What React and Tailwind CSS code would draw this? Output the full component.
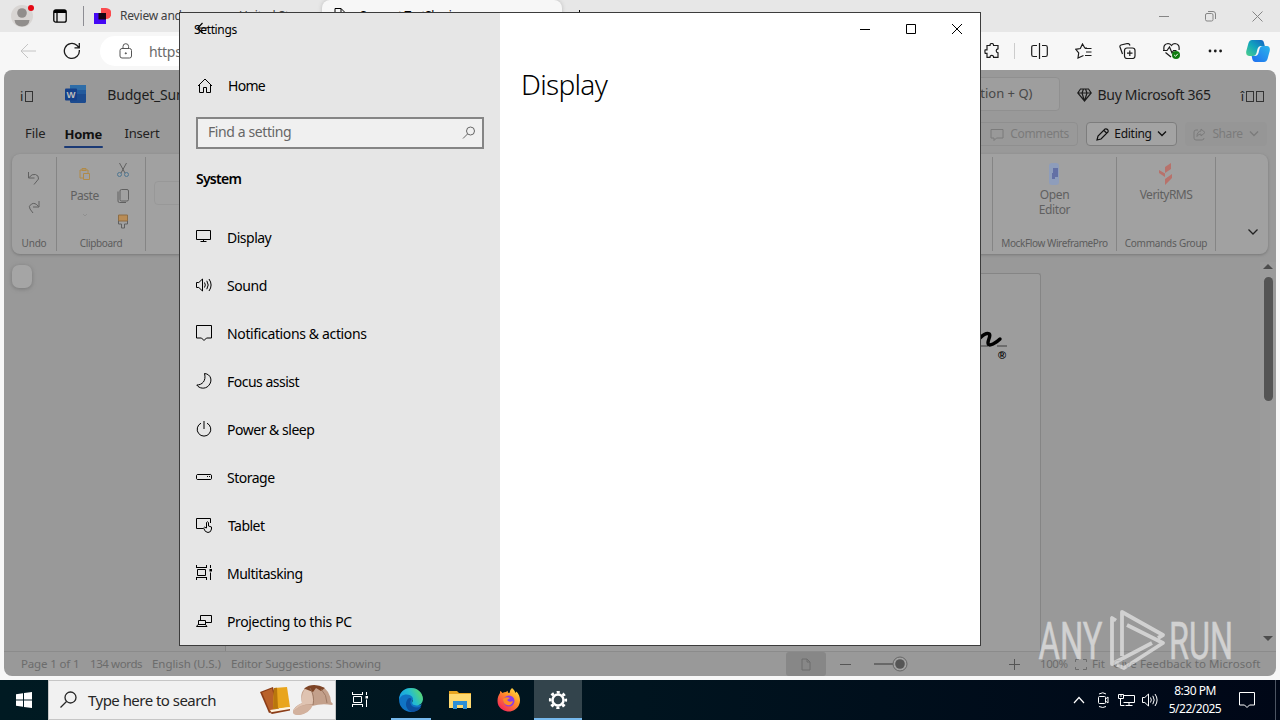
import React from "react";

const Icon = ({ w = 16, h = 16, className = "", children, sw = 1 }) => (
  <svg width={w} height={h} viewBox={`0 0 ${w} ${h}`} fill="none" stroke="currentColor" strokeWidth={sw} className={`shrink-0 ${className}`}>
    {children}
  </svg>
);

const Sound = ({ className = "" }) => (
  <Icon w={18} className={className}>
    <path d="M.5 5.500h2.300L6.500 2v12L2.800 10.500H.5z" />
    <path d="M8.500 5.500q1.600 2.500 0 5M10.800 3.800q2.800 4.200 0 8.400M13 2q4.200 6 0 12" />
  </Icon>
);

const TaskView = ({ className = "" }) => (
  <Icon className={className}>
    <path d="M0 2.500h11M0 12.500h11M.5 0v2.500M10.500 0v2.500M.5 12.500V15M10.500 12.500V15M1.500 4.500h8v6h-8zM14.500 0v3M14.500 7.500V15" />
    <path d="M13.500 4h2.500v2.500h-2.500z" fill="currentColor" stroke="none" />
  </Icon>
);

const Bubble = ({ className = "" }) => (
  <Icon w={17} h={17} className={className}>
    <path d="M.5.5h15v12.500h-5L8 15.500 5.500 13h-5z" />
  </Icon>
);

const navItems = [
  { label: "Display", track: "tracking-[-0.5px]", icon: <Icon><path d="M.5 1.500h14v9H.5zM7.500 10.500v2M4.500 12.500h6" /></Icon> },
  { label: "Sound", track: "tracking-[-0.4px]", icon: <Sound /> },
  { label: "Notifications & actions", track: "tracking-[-0.36px]", icon: <Bubble /> },
  { label: "Focus assist", track: "tracking-[-0.5px]", icon: <Icon><path d="M8.500.5C15 1 17 8 12.500 12.800 9 16.500 3 15.500.8 12 6 12 10.500 8 8.500.5z" /></Icon> },
  { label: "Power & sleep", track: "tracking-[-0.48px]", icon: <Icon><path d="M5 2.200a6.800 6.800 0 1 0 6 0M8 0v8" /></Icon> },
  { label: "Storage", track: "tracking-[-0.5px]", icon: <Icon><path d="M1.200 5.500h13.600l.7.7v3.600l-.7.7H1.200l-.7-.7V6.200zM11 7.500h1M13 7.500h1" /></Icon> },
  { label: "Tablet", track: "tracking-[-0.55px] pl-px", icon: <Icon><path d="M7 11.500H.5v-10h14V6M10.500 11V5.500q1-1.500 2 0V9l3 1v2q-.5 3.500-3.500 3.500T7.500 11l1-.8z" /></Icon> },
  { label: "Multitasking", track: "tracking-[-0.5px]", icon: <TaskView /> },
  { label: "Projecting to this PC", track: "tracking-[-0.36px]", icon: <Icon><path d="M4.500 8V2.500h11v7H10M2.500 7.500h7v4h-7zM.5 13.500l1.500-2h7.500l1.500 2z" /></Icon> },
];

function SettingsWindow() {
  return (
    <div className="absolute left-[179px] top-[12px] flex h-[634px] w-[802px] border border-[#3c3c3c] bg-white text-black">
      <aside className="w-[320px] bg-[#e6e6e6]">
        <div className="relative h-[49px] pl-[14px] pt-[9px] text-[12px] leading-[16px] tracking-[-0.35px]">
          Settings
          <Icon sw={1.200} className="absolute left-[17px] top-[7px]"><path d="M10.500 8H.8M5.500 3L.8 8l4.700 5" /></Icon>
        </div>
        <div className="flex h-[48px] items-center gap-[14px] pl-[17px] text-[14px]">
          <Icon w={17} h={16}><path d="M1 8l7-7 7 7M2.500 7v7.500h4v-5h3v5h4V7" /></Icon>
          <span className="-mt-px tracking-[-0.7px]">Home</span>
        </div>
        <div className="ml-[16px] mt-[7px] flex h-[32px] w-[288px] items-center justify-between border-2 border-[#858585] bg-[#f0f0f0] pb-[2px] pl-[10px] pr-[6px] text-[14px] text-[#666]">
          <span className="-mt-px tracking-[-0.4px]">Find a setting</span>
          <Icon w={14} h={14} className="mt-[2px]"><circle cx="8.500" cy="5" r="4" /><path d="M5.500 8L1 12.500" /></Icon>
        </div>
        <div className="mt-[20px] pl-[16px] text-[14px] font-semibold leading-[20px] tracking-[-0.75px]">System</div>
        <nav className="mt-[24px]">
          {navItems.map((n) => (
            <div key={n.label} className="flex h-[48px] items-center pl-[16px] text-[14px]">
              <span className="flex w-[31px]">{n.icon}</span>
              <span className={`whitespace-nowrap ${n.track}`}>{n.label}</span>
            </div>
          ))}
        </nav>
      </aside>
      <main className="flex-1">
        <div className="flex h-[32px] justify-end">
          <span className="flex w-[46px] items-center justify-center"><Icon w={10} h={10}><path d="M0 5.500h10" /></Icon></span>
          <span className="flex w-[46px] items-center justify-center"><Icon w={10} h={10}><path d="M.5.5h9v9h-9z" /></Icon></span>
          <span className="flex w-[46px] items-center justify-center"><Icon w={10} h={10}><path d="M0 0l10 10M10 0L0 10" /></Icon></span>
        </div>
        <h1 className="mt-[19px] pl-[21px] text-[28px] font-light leading-[40px] tracking-[-0.7px]">Display</h1>
      </main>
    </div>
  );
}

function TabStrip() {
  return (
    <div className="flex h-[32px] items-center bg-[#e7e7e7]">
      <svg width="24" height="26" viewBox="0 0 24 26" className="ml-[11px] shrink-0">
        <circle cx="11" cy="13" r="11" fill="#d8d5d3" />
        <circle cx="11" cy="10" r="4.800" fill="#918e8c" />
        <path d="M3.500 17h15q-.5 6-7.500 6.500Q4 23 3.500 17z" fill="#918e8c" />
        <circle cx="20" cy="5" r="3" fill="#e50914" />
      </svg>
      <Icon w={14} h={14} sw={1.300} className="ml-[18px] text-black"><rect x=".8" y=".8" width="12.400" height="12.400" rx="2" /><path d="M1 2.500h12" strokeWidth="3" /><path d="M4 4v9" /></Icon>
      <span className="ml-[16px] h-[20px] w-px bg-[#8d8d93]" />
      <svg width="17" height="17" viewBox="0 0 17 17" className="ml-[10px] shrink-0">
        <path d="M7 0h5a4.500 4.500 0 0 1 0 11H7z" fill="#fb4a4e" /><path d="M0 5h12v11H0z" fill="#4408f5" /><path d="M4.500 5H12v6.500H4.500z" fill="#160413" />
      </svg>
      <span className="ml-[9px] w-[202px] overflow-hidden whitespace-nowrap text-[12px] tracking-[-0.2px] text-[#404040]">Review and approve - United St</span>
      <div className="flex h-full w-[240px] items-center gap-[14px] rounded-t-[8px] bg-[#f7f7f7] pl-[12px] shadow-[0_0_4px_#bbb]">
        <Icon w={12} h={16}><path d="M1 .5h6l4 4v11H1zM7 .5v4h4" /></Icon>
        <span className="text-[12px] tracking-[-0.5px]">Support TestSharing</span>
      </div>
      <Icon w={12} h={12} className="ml-[11px]"><path d="M6.500 0v12M0 6.500h12" /></Icon>
      <div className="ml-auto flex items-center pr-[17px] text-[#858585]">
        <Icon w={10} h={10} className="mr-[36px]"><path d="M0 5.500h10" /></Icon>
        <Icon w={11} h={11} className="mr-[36px]"><rect x=".5" y="2.500" width="7.500" height="7.500" rx="1.500" /><path d="M3 .5h5q2.500 0 2.500 2.500v5" /></Icon>
        <Icon w={11} h={11}><path d="M.5.5l10 10M10.500.5l-10 10" /></Icon>
      </div>
    </div>
  );
}

function AddressBar() {
  return (
    <div className="flex h-[38px] items-center bg-[#f7f7f7] text-[#1b1b1b]">
      <Icon w={17} h={16} className="ml-[20px] text-[#c4c4c4]"><path d="M16 8H1M8 1L1 8l7 7" /></Icon>
      <Icon w={18} h={18} sw={1.300} className="ml-[26px]"><path d="M16.300 8a7.500 7.500 0 1 1-2.500-4.700L16 5.500M16.300 1v4.800h-4.800" /></Icon>
      <div className="ml-[19px] flex h-[30px] w-[850px] items-center rounded-full bg-white pl-[19px]">
        <Icon w={14} h={16} className="text-[#555]"><rect x="1" y="5.500" width="11.500" height="9.500" rx="2" /><path d="M4 5.500V3.500a2.800 2.800 0 0 1 5.600 0v2" /><circle cx="6.800" cy="10.300" r=".6" fill="currentColor" /></Icon>
        <span className="ml-[16px] text-[14px] tracking-[-0.3px] text-[#6b6b6b]">https://word.cloud.microsoft/open/onedrive</span>
      </div>
      <div className="ml-auto flex items-center pr-[10px]">
        <Icon w={16} h={16} sw={1.200} className="mr-[14px]"><path d="M3 2.500h3q0-2 1.800-2T9.600 2.500H14v3.300q-1.800.2-1.800 2t1.800 2v4.500H9.600q0-2-1.800-2t-1.800 2H3v-4H1.200Q.6 8 1.200 6.800H3z" /></Icon>
        <span className="mr-[16px] h-[16px] w-px bg-[#ccc]" />
        <Icon w={17} h={16} sw={1.200} className="mr-[27px]"><path d="M8.500 0v16M6 2.500H2.500q-1.800 0-1.800 1.800v7.400q0 1.800 1.800 1.800H6M11 2.500h3.500q1.800 0 1.800 1.800v7.400q0 1.800-1.800 1.800H11" /></Icon>
        <Icon w={17} h={16} sw={1.200} className="mr-[27px]"><path d="M8.500 12.500L3 15l.7-5L.8 6.300l4.500-.8L7.500 1l2.300 4H12M10 5.500h6.500M11 9h5.500M10 12.500h6.500" /></Icon>
        <Icon w={17} h={16} sw={1.200} className="mr-[27px]"><rect x="5.500" y="5" width="10.500" height="10.500" rx="2.500" /><path d="M10.800 7.500v5.500M8 10.200h5.500M3.500 11L1 4q-.4-1.500 1-2l6.500-1.500q2 0 2.500 2" /></Icon>
        <svg width="18" height="18" viewBox="0 0 18 18" className="mr-[27px] shrink-0">
          <path d="M1 8Q0 2 5 1.500q2 0 3.500 2Q10 1.500 12 1.500 17 2 16 8M2.500 10.500L8 15M0 8.500h4L6.500 5l2.500 6 1.500-2.500h3" fill="none" stroke="#1b1b1b" strokeWidth="1.200" />
          <circle cx="13" cy="13" r="4" fill="#107c10" /><path d="M11.200 13l1.300 1.300 2.300-2.500" fill="none" stroke="#fff" />
        </svg>
        <Icon w={15} h={4} className="mr-[23px]"><g fill="currentColor" stroke="none"><circle cx="2" cy="2" r="1.400" /><circle cx="7.300" cy="2" r="1.400" /><circle cx="12.600" cy="2" r="1.400" /></g></Icon>
        <svg width="24" height="24" viewBox="0 0 24 24" className="shrink-0">
          <defs>
            <linearGradient id="cpa" x1="0" y1="1" x2="1" y2="0"><stop offset="0" stopColor="#4fd08a" /><stop offset=".5" stopColor="#11a5bd" /><stop offset="1" stopColor="#1460c4" /></linearGradient>
            <linearGradient id="cpb" x1="0" y1="1" x2="1" y2="0"><stop offset="0" stopColor="#1f6df0" /><stop offset="1" stopColor="#29b5ea" /></linearGradient>
          </defs>
          <path d="M6 1h9q2.500 0 3 3l.8 3H15q-2.500 0-3.500 3l-1 4q-.8 3-3.500 3H3q-3.500-.5-2.700-5L2.500 4Q3.500 1 6 1z" fill="url(#cpa)" />
          <path d="M18 23H9.500Q7 23 6.300 20l-.6-3H9q2.500 0 3.500-3l1-4Q14.300 7 17 7h4q3.500.5 2.700 5L21.500 20Q20.500 23 18 23z" fill="url(#cpb)" />
        </svg>
      </div>
    </div>
  );
}

const Tofu = ({ n, lead }) => (
  <span className="flex items-end gap-[2px] text-[13px] leading-[14px] text-[#222]">
    <span>{lead}</span>
    {Array.from({ length: n }).map((_, i) => <span key={i} className="mb-px h-[11px] w-[8px] border border-[#333]" />)}
  </span>
);

const Group = ({ label, track = "tracking-[-0.2px]", className, children }) => (
  <div className={`flex flex-col items-center border-r border-[#858585] ${className}`}>
    <div className="flex h-[79px] w-full justify-center">{children}</div>
    <span className={`whitespace-nowrap text-[10px] leading-[16px] text-[#5c5c5c] ${track}`}>{label}</span>
  </div>
);

function WordHeader() {
  return (
    <>
      <div className="flex h-[48px] items-center pl-[16px] pr-[12px] text-[14px] text-[#1d1d1d]">
        <span className="mt-[4px]"><Tofu n={1} lead="i" /></span>
        <svg width="21" height="19" viewBox="0 0 21 19" className="ml-[32px] shrink-0">
          <rect x="5" y="0" width="16" height="18" rx="1.500" fill="#1c4b8f" /><path d="M5 0h16v5H5z" fill="#2e6da8" /><path d="M5 5h16v4H5z" fill="#235a9c" />
          <rect x="0" y="3.500" width="12" height="12" rx="1" fill="#14408a" />
          <text x="1.500" y="13" fontSize="9.500" fontWeight="700" fontFamily="Liberation Sans" fill="#bbb">W</text>
        </svg>
        <span className="ml-[21px] whitespace-nowrap tracking-[-0.2px]">Budget_Summary</span>
        <div className="ml-auto flex h-[34px] w-[500px] items-center justify-end rounded-[4px] border border-[#909090] bg-[#9e9e9e] pr-[27px] text-[13px] text-[#484848]">
          Search for tools, help, and more (Option + Q)
        </div>
        <Icon w={15} h={14} sw={1.200} className="ml-[17px] mt-[2px]"><path d="M3.500 1h8l2.700 4L7.500 13 .8 5zM1 5h13M5 5l2.500 8L10 5 8.500 1M5 5l1.500-4" /></Icon>
        <span className="ml-[5px] mr-[30px] whitespace-nowrap tracking-[-0.3px]">Buy Microsoft 365</span>
        <span className="mt-[4px]"><Tofu n={2} lead="î" /></span>
      </div>
      <div className="flex h-[32px] items-center pl-[21px] pr-[9px] text-[13px] text-[#222]">
        <span className="tracking-[-0.1px]">File</span>
        <span className="ml-[19px] flex h-[32px] flex-col justify-between pt-[6px] font-bold text-[#111]">
          <span className="leading-[20px] tracking-[-0.2px]">Home</span><span className="mb-[2px] h-[2px] w-[39px] rounded bg-[#1b3a75]" />
        </span>
        <span className="ml-[21px] tracking-[-0.15px]">Insert</span>
        <div className="ml-auto flex items-center gap-[8px] text-[12px]">
          <span className="flex h-[24px] w-[110px] items-center justify-end gap-[6px] rounded-[4px] border border-[#8f8f8f] pr-[8px] text-[#7b7b7b]">
            <Icon w={14} h={14} className="mt-px"><path d="M1 1.500h12v8.500H6.500L4 12.500V10H1z" /></Icon>
            <span className="tracking-[-0.35px]">Comments</span>
          </span>
          <span className="flex h-[24px] w-[91px] items-center justify-center gap-[5px] rounded-[4px] border border-[#7d7d7d] bg-[#a3a3a3] text-[#111]">
            <Icon w={13} h={13} sw={1.200}><path d="M1 12l1-4 7-7q1.500-.5 2.500.5t.5 2.500l-7 7zM8 2.500L10.500 5" /></Icon>
            <span className="tracking-[-0.3px]">Editing</span>
            <Icon w={10} h={6} sw={1.300}><path d="M1 .5l4 4 4-4" /></Icon>
          </span>
          <span className="flex h-[24px] w-[82px] items-center justify-center gap-[6px] rounded-[4px] bg-[#969696] text-[#7b7b7b]">
            <Icon w={13} h={13}><path d="M5 2H3Q1 2 1 4v6q0 2 2 2h6q2 0 2-2M8 1l4 3.500L8 8V6Q5 6 4 8.500 4 3.500 8 3z" /></Icon>
            <span className="tracking-[-0.4px]">Share</span>
            <Icon w={10} h={6} sw={1.300}><path d="M1 .5l4 4 4-4" /></Icon>
          </span>
        </div>
      </div>
    </>
  );
}

function Ribbon() {
  return (
    <div className="mx-[8px] mt-[4px] flex h-[100px] rounded-[8px] bg-[#a1a1a1] py-[3px] text-[12px] text-[#606060] shadow-[0_1px_3px_#777]">
      <Group label="Undo" className="w-[45px]">
        <div className="flex flex-col gap-[14px] pt-[14px]">
          <Icon w={14} h={15}><path d="M1.500 1v6h6M2 6.500Q5 2.500 8.500 3.500t3 4.500L7 13.500" /></Icon>
          <Icon w={14} h={15}><path d="M12 1v6H6M11.500 6.500Q8 2 4.500 4T3 9l3 4" /></Icon>
        </div>
      </Group>
      <Group label="Clipboard" track="tracking-[-0.35px]" className="w-[89px]">
        <div className="flex w-full">
          <div className="flex w-[55px] flex-col items-center pt-[11px]">
            <Icon w={12} h={12} className="text-[#b08a48]"><path d="M1 2h8v3M1 2v8h3M4.500 5.500h6v6h-6zM3 .5h4v2H3z" /></Icon>
            <span className="mt-[7px] leading-[18px] tracking-[-0.5px]">Paste</span>
            <Icon w={6} h={4} className="mt-[8px] text-[#909090]"><path d="M1 1l2 2 2-2" /></Icon>
          </div>
          <div className="flex flex-col items-center gap-[10px] pl-[4px] pt-[5px]">
            <Icon w={14} h={16}><path d="M3.500 1l5.500 10M10.500 1L5 11" /><circle cx="3.500" cy="12.500" r="2" stroke="#4f7690" /><circle cx="10.500" cy="12.500" r="2" stroke="#4f7690" /></Icon>
            <Icon w={14} h={16}><rect x="4" y="1.500" width="8.500" height="11.500" rx="1.500" /><path d="M2 3.500v9.500q0 1.500 1.500 1.500H10" /></Icon>
            <Icon w={14} h={16}><path d="M2.500 1h9v6h-9z" fill="#b98c55" stroke="#8d6d45" /><path d="M2.500 7v3h3v4h3v-4h3V7" /></Icon>
          </div>
        </div>
      </Group>
      <div className="flex-1 pl-[8px] pt-[24px]"><div className="h-[24px] w-[120px] rounded-[4px] border border-[#989898]" /></div>
      <span className="w-px bg-[#858585]" />
      <Group label="MockFlow WireframePro" track="tracking-[-0.4px]" className="w-[124px]">
        <div className="flex flex-col items-center pt-[5px] text-center leading-[15px]">
          <svg width="14" height="24" viewBox="0 0 14 24"><rect x="2" y="1" width="10" height="22" rx="3" fill="#8e9dbb" /><path d="M6 6h5v9H8v2H5v-6h1z" fill="#6370a5" /></svg>
          <span className="mt-px tracking-[-0.4px]">Open<br />Editor</span>
        </div>
      </Group>
      <Group label="Commands Group" track="tracking-[-0.25px]" className="w-[99px]">
        <div className="flex flex-col items-center pt-[5px] leading-[15px]">
          <svg width="14" height="24" viewBox="0 0 14 24" fill="#b8726b"><path d="M12 1v6l-6 4V5zM0 8l6 3.500V15l-6-4zM13 12v4l-7 7v-6z" /></svg>
          <span className="mt-px tracking-[-0.5px]">VerityRMS</span>
        </div>
      </Group>
      <div className="flex w-[52px] items-end justify-end pb-[15px] pr-[9px] text-[#222]"><Icon w={12} h={8} sw={1.300}><path d="M1.500 1.500l4.500 4.500 4.500-4.500" /></Icon></div>
    </div>
  );
}

function DocumentArea() {
  return (
    <div className="flex min-h-0 flex-1 pt-[8px]">
      <div className="w-[221px] pl-[8px] pt-[3px]"><div className="h-[23px] w-[20px] rounded-[7px] bg-[#a5a5a5] shadow-[0_1px_4px_#777]" /></div>
      <div className="mt-[11px] flex w-[816px] justify-end rounded-tr-[3px] border border-b-0 border-[#858585] bg-[#9d9d9d] pr-[32px] pt-[52px]">
        <svg width="36" height="36" viewBox="0 0 36 36" className="text-black">
          <path d="M2 20h14M25 20h10" stroke="#5d5d5d" strokeWidth="1.500" />
          <path d="M8 12Q13 7 16 7.500c4 .5 0 6 0 9s2 3 5 1.500 5-3 7-5" fill="none" stroke="currentColor" strokeWidth="3.400" strokeLinecap="round" />
          <text x="26" y="33" fontSize="11" fontWeight="700" fontFamily="Liberation Sans" fill="currentColor">®</text>
        </svg>
      </div>
      <div className="ml-auto flex w-[16px] flex-col items-center bg-[#9b9b9b] text-[#4d4d4d]">
        <svg width="10" height="6" viewBox="0 0 10 6" className="mt-px"><path d="M0 6l5-5 5 5z" fill="currentColor" /></svg>
        <span className="mt-[8px] h-[124px] w-[9px] rounded-full bg-[#555]" />
        <svg width="10" height="6" viewBox="0 0 10 6" className="mb-[9px] mt-auto"><path d="M0 0l5 5 5-5z" fill="currentColor" /></svg>
      </div>
    </div>
  );
}

function StatusBar() {
  return (
    <div className="flex h-[25px] items-center border-t border-[#8b8b8b] pl-[17px] pr-[16px] text-[11.500px] tracking-[-0.15px] text-[#6c6c6c]">
      <span className="w-[69px] whitespace-nowrap">Page 1 of 1</span>
      <span className="w-[62px] whitespace-nowrap tracking-[-0.4px]">134 words</span>
      <span className="w-[79px] whitespace-nowrap tracking-[-0.05px]">English (U.S.)</span>
      <span className="whitespace-nowrap">Editor Suggestions: Showing</span>
      <div className="ml-auto flex items-center">
        <span className="flex h-[24px] w-[40px] items-center justify-center rounded-[3px] bg-[#878787]"><Icon w={12} h={13}><path d="M2 1h5l3 3v8H2zM7 1v3h3" /></Icon></span>
        <Icon w={11} h={11} className="ml-[14px] text-[#555]"><path d="M0 5.500h11" /></Icon>
        <svg width="36" height="16" viewBox="0 0 36 16" className="ml-[22px] shrink-0"><path d="M1 8h19" stroke="#595959" strokeWidth="1.500" /><circle cx="27" cy="8" r="7" fill="#a2a2a2" stroke="#666" /><circle cx="27" cy="8" r="4.800" fill="#555" /></svg>
        <Icon w={11} h={11} className="ml-[100px] text-[#555]"><path d="M0 5.500h11M5.500 0v11" /></Icon>
        <span className="ml-[20px] w-[35px] tracking-[-0.4px]">100%</span>
        <Icon w={12} h={11}><path d="M.5 3V.5H4M8 .5h3.500V3M.5 8v2.500H4M8 10.500h3.500V8" /></Icon>
        <span className="ml-[5px] w-[21px]">Fit</span>
        <span className="w-[147px] whitespace-nowrap tracking-[0.06px]">Give Feedback to Microsoft</span>
      </div>
    </div>
  );
}

function Taskbar() {
  return (
    <div className="flex h-[40px] bg-linear-to-r from-[#001a22] via-[#00141f] to-[#000717] text-white">
      <div className="flex w-[48px] items-center justify-center"><svg width="16" height="16" viewBox="0 0 16 16" fill="#fff"><path d="M0 2.200L7 1.200v6.300H0zM8 1l8-1v7.500H8zM0 8.500h7v6.300l-7-1zM8 8.500h8V16l-8-1z" /></svg></div>
      <div className="flex w-[288px] items-center border border-[#c6c6c6] bg-[#f1f1f1] text-[15px] text-[#262626]">
        <Icon w={18} h={18} sw={1.300} className="ml-[11px]"><circle cx="10.500" cy="6.500" r="5.500" /><path d="M6.500 10.500L.5 16.500" /></Icon>
        <span className="ml-[10px] whitespace-nowrap tracking-[-0.53px]">Type here to search</span>
        <svg width="74" height="34" viewBox="0 0 74 34" className="ml-auto mr-px shrink-0">
          <path d="M0 9l13-5 6 22-10 4z" fill="#8b3d18" /><path d="M2 9.500l10-4 5 20-7 3z" fill="#b9612a" />
          <path d="M14 5l13-1 3 20-17 2z" fill="#e9a51d" /><path d="M14 5l3-.3 1 20.800-5 .5z" fill="#b9760c" /><path d="M10 27l20-3v2.500L12 30z" fill="#fff3dc" /><path d="M9.500 29.500L30 26v1.500L12 31z" fill="#8b3d18" />
          <path d="M42 20Q39 7 48 4q14-4 20 5 3 5 3 10 3 2 1 3-10-2-20 1-5 8-13 9-6 0-6-3 0-5 9-9z" fill="#c3a08b" />
          <path d="M42 20Q40 8 49 4q5 8 4 17-12-1-20 8 1-5 9-9z" fill="#dfc3b1" /><path d="M33 29q7-9 20-7-4 9-14 10-6 0-6-3z" fill="#d2b19d" />
          <path d="M44 5.500Q53-1 65 5l-4 3-5-3-3 4z" fill="#7d4426" /><path d="M50 5q5 8 3 17M61 6q6 6 6 14" fill="none" stroke="#94705b" strokeWidth=".8" />
        </svg>
      </div>
      <div className="flex w-[48px] items-center justify-center"><TaskView /></div>
      <div className="flex w-[54px] flex-col items-center">
        <svg width="26" height="26" viewBox="0 0 24 24" className="mt-[7px]">
          <defs><linearGradient id="ed" x1="0" y1=".6" x2="1" y2=".2"><stop offset="0" stopColor="#159ce5" /><stop offset=".5" stopColor="#24bdd0" /><stop offset="1" stopColor="#63dc60" /></linearGradient></defs>
          <circle cx="12" cy="12" r="11" fill="#1074c4" />
          <path d="M13 12.500c-1 3 4 5 9 3.500q-.5 1.500-1.500 2.500L23 21V12z" fill="#00151f" />
          <path d="M1 12C1 5 6 1 12 1s11 4.500 11 10c0 4-3 6-6 6s-5-1.500-3.500-4c1.500-3-1.500-6-5.500-6-4 0-6 2-7 5z" fill="url(#ed)" />
          <path d="M9 11c-3 4-2 10 4 12 4 0 7-2 8.500-5-4 2-9 1-10-3-.3-1.500.2-2.500 1-4-1-1.500-2.500-1-3.500 0z" fill="#0c4f9e" />
        </svg>
        <span className="mt-auto h-[2px] w-[40px] bg-[#76b9ed]" />
      </div>
      <div className="flex w-[44px] items-center justify-center"><svg width="22" height="20" viewBox="0 0 22 20"><path d="M0 1h8l2 2h12v4H0z" fill="#e8a520" /><path d="M0 4h22v14H0z" fill="#ffd970" /><path d="M4 19v-8h14v8h-4v-4H8v4z" fill="#2f8fd5" /></svg></div>
      <div className="flex w-[52px] items-center justify-center pl-px"><svg width="24" height="24" viewBox="0 0 24 24">
        <defs><linearGradient id="ff" x1="1" y1="0" x2=".2" y2="1"><stop offset="0" stopColor="#fff04a" /><stop offset=".45" stopColor="#ff9326" /><stop offset="1" stopColor="#f5205c" /></linearGradient></defs>
        <path d="M15 0c2 2 3 3 3.500 5l1-1.500C23 7 24 13 22 17c-2 4-6 6.500-10 6.500S2 21 .8 15.500C0 11 1 8 3 5V3q1.500.5 2.500 2Q7 4 9 4q1-1 2-1.200Q10 5 12.500 5q0-3 2.500-5z" fill="url(#ff)" />
        <circle cx="12" cy="13" r="5.500" fill="#8a3be8" /><path d="M6 11q3-3 7-1l-3 2q2 3 6 1-1 5-6 4-4-1-4-6z" fill="#ff8b25" />
      </svg></div>
      <div className="flex w-[48px] flex-col items-center bg-[#33444c]">
        <svg width="20" height="20" viewBox="0 0 20 20" className="mt-[10px]" fill="none" stroke="#fff"><circle cx="10" cy="10" r="5.500" strokeWidth="2.500" /><circle cx="10" cy="10" r="7.800" strokeWidth="2.600" strokeDasharray="3.100 3.026" strokeDashoffset="1.550" /></svg>
        <span className="mt-auto h-[2px] w-full bg-[#76b9ed]" />
      </div>
      <div className="ml-auto flex items-center">
        <Icon w={12} h={8} sw={1.200} className="mr-[12px]"><path d="M1 7l5-5.500L11 7" /></Icon>
        <Icon w={13} h={16} className="mr-[8px]"><rect x="1.500" y="4.500" width="7" height="7" rx="1" /><path d="M8.500 7l2.500-2v6l-2.500-2M2 2q4-2.500 7 0M2 14.500q4 2 7 0" /></Icon>
        <Icon w={17} h={14} className="mr-[7px]"><path d="M6 2.500h10.500v7H5.500M11 9.500v3M7.500 12.500h7M.5 1.500h5v4h-5zM2.500 5.500v7h4M2 3h2" /></Icon>
        <Sound />
        <div className="ml-[3px] flex w-[64px] flex-col items-center text-[12px] leading-[18px] tracking-[-0.5px]"><span>8:30 PM</span><span>5/22/2025</span></div>
        <Bubble className="ml-[12px]" />
        <span className="ml-[19px] mr-[4px] h-[40px] w-px bg-[#4c5462]" />
      </div>
    </div>
  );
}

function Watermark() {
  return (
    <svg width="204" height="70" viewBox="0 0 204 70" className="absolute left-[1036px] top-[606px] overflow-visible opacity-55" fill="#fff" fontFamily="Roboto" fontSize="51">
      <text x="2.500" y="53" textLength="64" lengthAdjust="spacingAndGlyphs" stroke="#fff" strokeWidth=".5">ANY</text>
      <text x="133" y="53" textLength="64" lengthAdjust="spacingAndGlyphs" stroke="#fff" strokeWidth=".5">RUN</text>
      <path d="M80 14.500L76 12v46L116 37M86 50V6l41 23-5 3M91 19l36 18-39 25-7-3" fill="none" stroke="#fff" strokeWidth="3.800" strokeLinejoin="round" />
    </svg>
  );
}

export default function App() {
  return (
    <div className="relative flex h-[720px] w-[1280px] flex-col overflow-hidden bg-[#f7f7f7] font-['Noto_Sans',sans-serif]">
      <TabStrip />
      <AddressBar />
      <div className="mx-[4px] mb-[4px] flex min-h-0 flex-1 flex-col overflow-hidden rounded-[8px] bg-[#999]">
        <WordHeader />
        <Ribbon />
        <DocumentArea />
        <StatusBar />
      </div>
      <Taskbar />
      <SettingsWindow />
      <Watermark />
    </div>
  );
}
